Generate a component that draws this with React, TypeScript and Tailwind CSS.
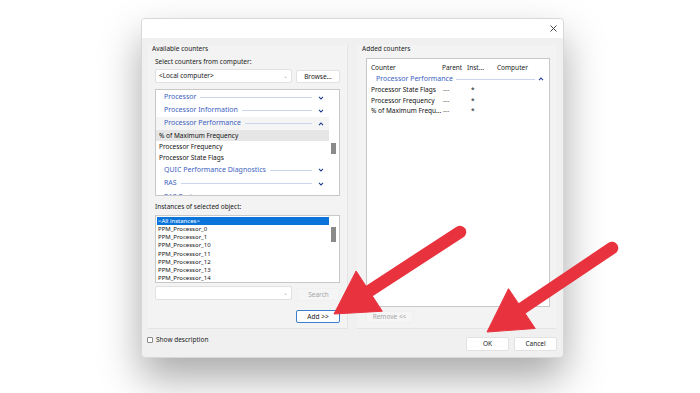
import React from "react";

const FONT = "font-['Noto_Sans',sans-serif]";

function Chevron({ up }: { up?: boolean }) {
  return (
    <svg width="6" height="4" viewBox="0 0 6 4" className="shrink-0">
      <path
        d={up ? "M1 3.2 L3 1 L5 3.2" : "M1 0.8 L3 3 L5 0.8"}
        fill="none"
        stroke="#1f3d8c"
        strokeWidth="1.1"
      />
    </svg>
  );
}

function GroupHeader({ label, up, h = "h-[13px]" }: { label: string; up?: boolean; h?: string }) {
  return (
    <div className={`${h} flex items-center pl-[8px] pr-[5px] gap-[4px]`}>
      <span className="text-[#3d5fbf] text-[7px] whitespace-nowrap">{label}</span>
      <div className="flex-1 h-px bg-[#c9d6ee]" />
      <div className="w-[6px] ml-[2px] flex justify-center">
        <Chevron up={up} />
      </div>
    </div>
  );
}

function Combo({ text }: { text?: string }) {
  return (
    <div className="w-[137px] h-[14px] bg-white border border-[#e0e0e0] rounded-[2px] flex items-center px-[3px]">
      <span className="flex-1 text-[6.5px] text-[#222]">{text}</span>
      <span className="text-[6px] text-[#b0b0b0] leading-none">⌄</span>
    </div>
  );
}

function Btn({
  label,
  w,
  disabled,
  primary,
  h = "h-[13px]",
}: {
  label: string;
  w: string;
  disabled?: boolean;
  primary?: boolean;
  h?: string;
}) {
  const cls = disabled
    ? "bg-[#f5f5f5] text-[#a5a5a5] border-[#f0f0f0]"
    : primary
    ? "bg-white text-[#1a1a1a] border-[#3c7fcf]"
    : "bg-white text-[#1a1a1a] border-[#e2e2e2]";
  return (
    <div className={`${w} ${h} ${cls} border rounded-[2px] flex items-center justify-center text-[6.5px]`}>
      {label}
    </div>
  );
}

const INSTANCES = [
  "PPM_Processor_0",
  "PPM_Processor_1",
  "PPM_Processor_10",
  "PPM_Processor_11",
  "PPM_Processor_12",
  "PPM_Processor_13",
  "PPM_Processor_14",
];

const ADDED = [
  "Processor State Flags",
  "Processor Frequency",
  "% of Maximum Frequ...",
];

function Arrow({ tail, tip }: { tail: [number, number]; tip: [number, number] }) {
  const dx = tip[0] - tail[0];
  const dy = tip[1] - tail[1];
  const len = Math.hypot(dx, dy);
  const ux = dx / len;
  const uy = dy / len;
  const nx = -uy;
  const ny = ux;
  const bx = tip[0] - 42 * ux;
  const by = tip[1] - 42 * uy;
  const w1 = [bx + 24 * nx, by + 24 * ny];
  const w2 = [bx - 24 * nx, by - 24 * ny];
  return (
    <g fill="#e8333f" stroke="#e8333f">
      <line
        x1={tail[0]}
        y1={tail[1]}
        x2={bx + 6 * ux}
        y2={by + 6 * uy}
        strokeWidth="12.5"
        strokeLinecap="round"
      />
      <polygon points={`${tip[0]},${tip[1]} ${w1[0]},${w1[1]} ${w2[0]},${w2[1]}`} strokeWidth="1" strokeLinejoin="round" />
    </g>
  );
}

export default function App() {
  return (
    <div className={`relative w-[700px] h-[393px] bg-white overflow-hidden ${FONT}`}>
      <div className="pl-[141px] pt-[18px]">
        <div className="w-[423px] h-[340px] bg-[#f0f0f0] rounded-[4px] border border-[#d8d8d8] shadow-[0_20px_40px_rgba(0,0,0,0.34)] flex flex-col overflow-hidden">
          {/* title bar */}
          <div className="h-[19px] bg-white flex items-center justify-end pr-[6px] shrink-0">
            <svg width="7" height="7" viewBox="0 0 7 7">
              <path d="M0.5 0.5 L6.5 6.5 M6.5 0.5 L0.5 6.5" stroke="#333" strokeWidth="0.9" />
            </svg>
          </div>

          <div className="flex gap-[9px] pl-[6px] pt-[7px]">
            {/* Available counters */}
            <div className="w-[200px] h-[284px] bg-[#f3f3f3] border-r border-b border-[#e4e4e4] pl-[7px] pr-[7px] flex flex-col">
              <div className="h-[8px] -ml-[3px] flex items-center text-[6.5px] text-[#222]">Available counters</div>
              <div className="h-[8px] mt-[5px] flex items-center text-[6.5px] text-[#222]">Select counters from computer:</div>
              <div className="flex justify-between items-start mt-[3px]">
                <Combo text="<Local computer>" />
                <div className="mt-[1px]">
                  <Btn label="Browse..." w="w-[44px]" />
                </div>
              </div>

              {/* counters list */}
              <div className="mt-[6px] h-[107px] bg-white border border-[#c8c8c8] relative overflow-hidden">
                <div className="pr-[10px] pt-[1px]">
                  <GroupHeader label="Processor" />
                  <GroupHeader label="Processor Information" />
                  <div className="bg-[#f5f5f5]">
                    <GroupHeader label="Processor Performance" up />
                  </div>
                  <div className="h-[11px] bg-[#e6e6e6] flex items-center pl-[3px] text-[6.5px] text-[#111]">% of Maximum Frequency</div>
                  <div className="h-[11px] flex items-center pl-[3px] text-[6.5px] text-[#111]">Processor Frequency</div>
                  <div className="h-[11px] flex items-center pl-[3px] text-[6.5px] text-[#111]">Processor State Flags</div>
                  <GroupHeader label="QUIC Performance Diagnostics" h="h-[14px]" />
                  <GroupHeader label="RAS" h="h-[13px]" />
                  <GroupHeader label="RAS Ports" h="h-[14px]" />
                </div>
                <div className="absolute right-[3px] top-[53px] w-[5px] h-[11px] bg-[#8a8a8a]" />
              </div>

              <div className="h-[8px] mt-[7px] flex items-center text-[6.5px] text-[#222]">Instances of selected object:</div>

              {/* instances list */}
              <div className="mt-[4px] h-[68px] bg-white border border-[#c8c8c8] relative overflow-hidden">
                <div className="pr-[10px] pt-[1px] pl-[1px]">
                  <div className="h-[8px] bg-[#0a74da] text-white flex items-center pl-[1px] text-[6px]">&lt;All instances&gt;</div>
                  {INSTANCES.map((n) => (
                    <div key={n} className="h-[8.3px] flex items-center pl-[1px] text-[6px] text-[#111]">
                      {n}
                    </div>
                  ))}
                </div>
                <div className="absolute right-[3px] top-[11px] w-[5px] h-[15px] bg-[#8a8a8a]" />
              </div>

              <div className="flex justify-between items-start mt-[3px]">
                <Combo />
                <div className="mt-[2px]">
                  <Btn label="Search" w="w-[43px]" disabled />
                </div>
              </div>

              <div className="flex justify-end mt-[9px]">
                <Btn label="Add >>" w="w-[44px]" primary />
              </div>
            </div>

            {/* Added counters */}
            <div className="w-[199px] h-[284px] bg-[#f3f3f3] border-b border-[#e4e4e4] pl-[9px] flex flex-col">
              <div className="h-[8px] -ml-[4px] flex items-center text-[6.5px] text-[#222]">Added counters</div>
              <div className="mt-[5px] w-[184px] h-[249px] bg-white border border-[#c8c8c8] pl-[4px] pt-[5px]">
                <div className="h-[8px] flex items-center text-[6.5px] text-[#222]">
                  <span className="w-[71px]">Counter</span>
                  <span className="w-[25px]">Parent</span>
                  <span className="w-[30px]">Inst...</span>
                  <span>Computer</span>
                </div>
                <div className="h-[12px] mt-[1px] flex items-center pl-[5px] pr-[5px] gap-[3px]">
                  <span className="text-[#3d5fbf] text-[7px] whitespace-nowrap">Processor Performance</span>
                  <div className="flex-1 h-px bg-[#c9d6ee]" />
                  <Chevron up />
                </div>
                {ADDED.map((r) => (
                  <div key={r} className="h-[10.5px] flex items-center text-[6.5px] text-[#111]">
                    <span className="w-[72px] whitespace-nowrap">{r}</span>
                    <span className="w-[28px] text-[#555]">---</span>
                    <span>*</span>
                  </div>
                ))}
              </div>
              <div className="mt-[4px]">
                <Btn label="Remove <<" w="w-[47px]" disabled h="h-[12px]" />
              </div>
            </div>
          </div>

          {/* bottom */}
          <div className="flex items-start justify-between pl-[5px] pr-[6px] mt-[5px]">
            <div className="flex items-center gap-[3px] h-[9px] mt-[1px]">
              <div className="w-[6px] h-[6px] border border-[#8a8a8a] bg-white rounded-[1px]" />
              <span className="text-[6.5px] text-[#222]">Show description</span>
            </div>
            <div className="flex gap-[5px] mt-[3px]">
              <Btn label="OK" w="w-[43px]" h="h-[14px]" />
              <Btn label="Cancel" w="w-[43px]" h="h-[14px]" />
            </div>
          </div>
        </div>
      </div>

      <svg className="absolute inset-0 pointer-events-none" width="700" height="393" viewBox="0 0 700 393">
        <Arrow tail={[460, 232]} tip={[334, 314]} />
        <Arrow tail={[612, 248]} tip={[487, 332]} />
      </svg>
    </div>
  );
}
